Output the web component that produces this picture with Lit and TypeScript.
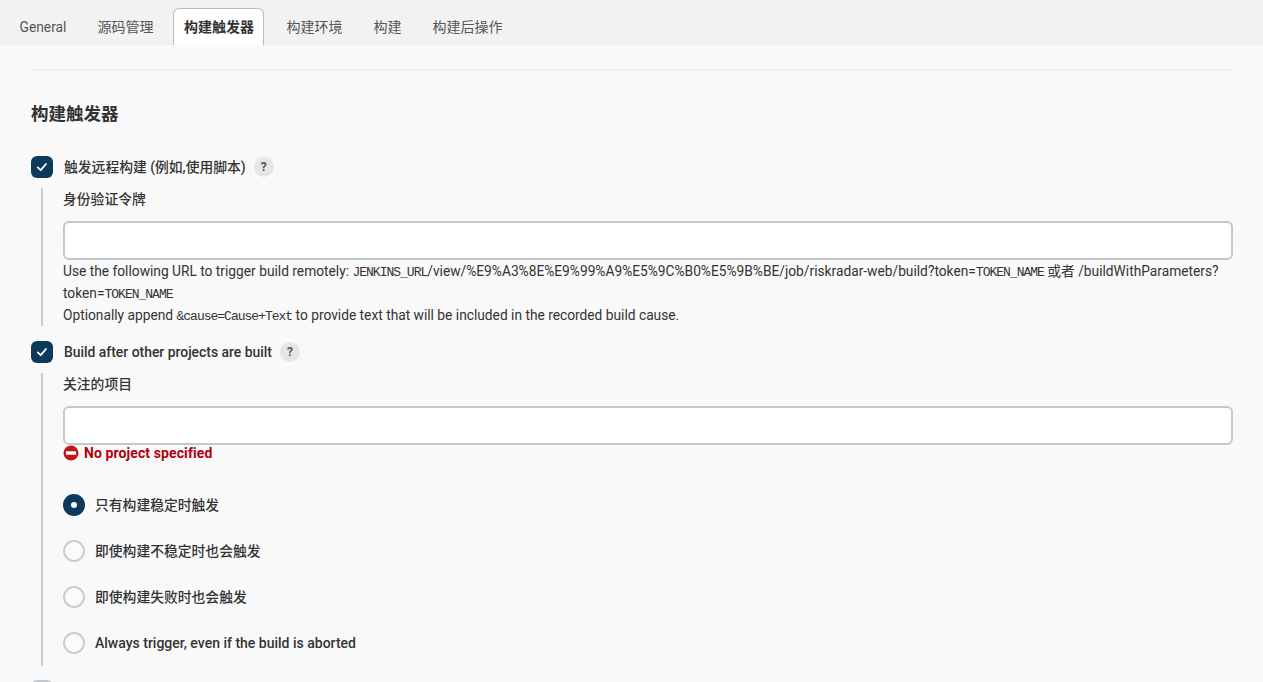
import { LitElement, html, css } from "lit";
import { customElement } from "lit/decorators.js";

const help = html`<span class="help">?</span>`;
const check = html`<span class="cb"><svg width="14" height="14" viewBox="0 0 14 14"><path d="M2.8 7.4 5.7 10.2 11 4" fill="none" stroke="#fff" stroke-width="1.8" stroke-linecap="round" stroke-linejoin="round"/></svg></span>`;

@customElement("app-root")
export class AppRoot extends LitElement {
  static styles = css`
    :host { display: block; height: 682px; overflow: hidden; background: #f9f9f9; color: #333;
      font-family: Roboto, "Noto Sans CJK SC", sans-serif; font-size: 13.8px; line-height: 22px; }
    .tabs { display: flex; height: 45px; background: #f2f2f2; padding: 8px 0 0 4px; box-sizing: border-box; color: #555; font-size: 14px; }
    .tab { padding: 0 11px; height: 37px; line-height: 38px; margin: 0 4.5px; box-sizing: border-box; white-space: nowrap; }
    .tab.gen { font-size: 13.8px; }
    .tab.on { background: #fff; border: 1px solid #b8bcc2; border-bottom: none; border-radius: 6px 6px 0 0;
      font-weight: 700; color: #333; line-height: 36px; margin: 0 6.5px 0 4.5px; padding: 0 9.5px; }
    .main { padding: 0 30px 0 31px; }
    hr { border: none; border-top: 2px solid #f0f0f1; margin: 24px 1px 0 0; }
    h2 { font-size: 17.5px; font-weight: 700; margin: 30px 0 0; line-height: 26px; height: 26px; color: #333; }
    .row { display: flex; align-items: center; height: 22px; gap: 11px; font-weight: 500; }
    .row.first { margin-top: 29px; }
    .lat { font-size: 13.9px; }
    .always { font-size: 14px; }
    .cb { width: 22px; height: 22px; border-radius: 6px; background: #0b3a5c; display: flex; align-items: center; justify-content: center; flex: none; }
    .help { width: 20px; height: 20px; border-radius: 50%; background: #e6e6e8; color: #555; font-size: 12px; font-weight: 700;
      display: flex; align-items: center; justify-content: center; margin-left: -3px; }
    .nest { margin-left: 10px; border-left: 2px solid #c9ccd1; padding-left: 20px; box-sizing: border-box; }
    .n1 { margin-top: 10px; height: 138px; margin-bottom: 15px; }
    .n2 { margin-top: 10px; height: 293px; margin-bottom: 14px; }
    .label { height: 22px; line-height: 22px; font-weight: 500; }
    .input { height: 39px; background: #fff; border: 2px solid #c3c8cd; border-radius: 6px; box-sizing: border-box; margin-top: 11px; }
    .hint { line-height: 22px; font-size: 13.75px; }
    code { font-family: "Liberation Mono", monospace; font-size: 13px; letter-spacing: -1px; line-height: 1; }
    .err { color: #b0000f; font-weight: 700; display: flex; align-items: center; gap: 5px; height: 20px; margin-top: -2px; font-size: 14px; letter-spacing: 0.1px; }
    .radios { margin-top: 31px; display: flex; flex-direction: column; gap: 24px; }
    .radio { display: flex; align-items: center; gap: 10px; height: 22px; font-weight: 500; }
    .rd { width: 22px; height: 22px; box-sizing: border-box; border-radius: 50%; border: 2px solid #c9ccd1; background: #fbfbfc; flex: none; }
    .rd.on { border: 8px solid #0b3a5c; background: #fff; }
    .cb.off { background: #fff; border: 2px solid #c3c8cd; box-sizing: border-box; }
  `;
  render() {
    return html`
      <div class="tabs">
        <div class="tab gen">General</div>
        <div class="tab">源码管理</div>
        <div class="tab on">构建触发器</div>
        <div class="tab">构建环境</div>
        <div class="tab">构建</div>
        <div class="tab">构建后操作</div>
      </div>
      <div class="main">
        <hr />
        <h2>构建触发器</h2>
        <div class="row first">${check}<span>触发远程构建 (例如,使用脚本)</span>${help}</div>
        <div class="nest n1">
          <div class="label">身份验证令牌</div>
          <div class="input"></div>
          <div class="hint">Use the following URL to trigger build remotely: <code>JENKINS_URL</code>/view/%E9%A3%8E%E9%99%A9%E5%9C%B0%E5%9B%BE/job/riskradar-web/build?token=<code>TOKEN_NAME</code> 或者 /buildWithParameters?<wbr />token=<code>TOKEN_NAME</code><br />Optionally append <code>&amp;cause=Cause+Text</code> to provide text that will be included in the recorded build cause.</div>
        </div>
        <div class="row">${check}<span class="lat">Build after other projects are built</span>${help}</div>
        <div class="nest n2">
          <div class="label">关注的项目</div>
          <div class="input"></div>
          <div class="err"><svg width="16" height="16" viewBox="0 0 16 16"><circle cx="8" cy="8" r="7.5" fill="#c4161c"/><rect x="3" y="6.3" width="10" height="3.4" fill="#fff"/></svg>No project specified</div>
          <div class="radios">
            <div class="radio"><span class="rd on"></span>只有构建稳定时触发</div>
            <div class="radio"><span class="rd"></span>即使构建不稳定时也会触发</div>
            <div class="radio"><span class="rd"></span>即使构建失败时也会触发</div>
            <div class="radio always"><span class="rd"></span>Always trigger, even if the build is aborted</div>
          </div>
        </div>
        <div class="row"><span class="cb off"></span><span>Build periodically</span></div>
      </div>
    `;
  }
}
